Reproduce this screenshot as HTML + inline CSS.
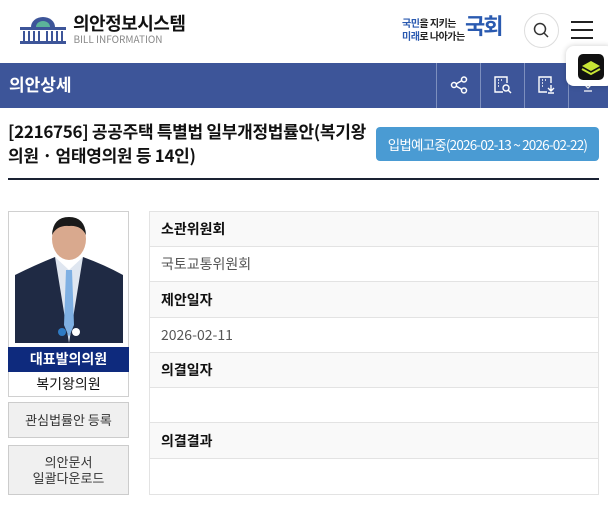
<!DOCTYPE html>
<html><head><meta charset="utf-8">
<style>
*{margin:0;padding:0;box-sizing:border-box}
body{width:608px;height:516px;overflow:hidden;background:#fff;font-family:"Noto Sans CJK KR","Liberation Sans",sans-serif;position:relative;color:#111}
.abs{position:absolute}
.bar{left:0;top:63px;width:608px;height:45px;background:#3d5599}
.bar .t{left:9px;top:9px;color:#fff;font-size:17px;font-weight:bold;line-height:24px}
.ic{top:0;width:44px;height:45px;border-left:1px solid #7d8fbe}
.title{left:8px;top:119px;width:380px;font-size:17px;font-weight:bold;line-height:24px;color:#111;white-space:nowrap;letter-spacing:-0.3px}
.btn{left:376px;top:127px;width:223px;height:34px;background:#4a9bd3;border-radius:4px;color:#fff;font-size:13.5px;text-align:center;line-height:34px;letter-spacing:-0.8px;white-space:nowrap}
.hr{left:8px;top:178px;width:591px;height:2px;background:#1a2233}
.card{left:8px;top:211px;width:121px;height:186px;border:1px solid #d0d0d0}
.lbl{left:8px;top:347px;width:121px;height:25px;background:#0e2a7d;color:#fff;font-weight:bold;font-size:14px;text-align:center;line-height:25px}
.nm{left:8px;top:372px;width:121px;height:24px;font-size:14px;text-align:center;line-height:24px}
.gb{left:8px;width:121px;background:#f0f0f0;border:1px solid #ccc;font-size:13px;color:#333;text-align:center;display:flex;align-items:center;justify-content:center;line-height:16px}
.tbl{left:149px;top:211px;width:450px;height:284px;border:1px solid #e3e3e3}
.row{position:absolute;left:0;width:448px;border-bottom:1px solid #e3e3e3;padding-left:11px;font-size:14px;display:flex;align-items:center}
.h{background:#f9f9f9;font-weight:bold;color:#111}
.v{color:#555}
</style></head><body>
<svg class="abs" style="left:18px;top:15px" width="50" height="30" viewBox="0 0 50 30">
<path d="M13 12 A12 10 0 0 1 37 12 Z" fill="#3d5599"/>
<path d="M18 12 A7 6 0 0 1 32 12 Z" fill="#5cb39a"/>
<rect x="2" y="12" width="46" height="3" fill="#3d5599"/>
<g fill="#3d5599"><rect x="5" y="16" width="2" height="10"/><rect x="10" y="16" width="2" height="10"/><rect x="15" y="16" width="2" height="10"/><rect x="20" y="16" width="2" height="10"/><rect x="28" y="16" width="2" height="10"/><rect x="33" y="16" width="2" height="10"/><rect x="38" y="16" width="2" height="10"/><rect x="43" y="16" width="2" height="10"/></g>
<rect x="2" y="26" width="46" height="3" fill="#3d5599"/>
</svg>
<div class="abs" style="left:73px;top:10px;font-size:18px;font-weight:bold;letter-spacing:-0.5px;line-height:26px">의안정보시스템</div>
<div class="abs" style="left:63px;top:33px;font-size:10px;color:#888;line-height:12px;width:110px;text-align:center">BILL INFORMATION</div>
<div class="abs" style="left:402px;top:16px;font-size:10px;line-height:13px;font-weight:bold;color:#222;letter-spacing:-0.5px"><span style="color:#2a5ab0">국민</span>을 지키는<br><span style="color:#2a5ab0">미래</span>로 나아가는</div>
<div class="abs" style="left:465px;top:10px;font-size:22px;font-weight:bold;color:#2a5ab0;letter-spacing:-2px;line-height:30px">국회</div>
<div class="abs" style="left:524px;top:13px;width:35px;height:35px;border-radius:50%;border:1px solid #ddd;background:#fff"></div>
<svg class="abs" style="left:533px;top:22px" width="17" height="17" viewBox="0 0 17 17"><circle cx="7" cy="7" r="5.5" fill="none" stroke="#333" stroke-width="1.5"/><path d="M11 11 L15 15" stroke="#333" stroke-width="1.5"/></svg>
<div class="abs" style="left:571px;top:21px;width:22px;height:2px;background:#222"></div>
<div class="abs" style="left:571px;top:29px;width:22px;height:2px;background:#222"></div>
<div class="abs" style="left:571px;top:37px;width:22px;height:2px;background:#222"></div>
<div class="abs bar">
 <div class="abs t">의안상세</div>
 <div class="abs ic" style="left:436px"><svg style="margin:13px 0 0 13px" width="18" height="18" viewBox="0 0 18 18" fill="none" stroke="#fff" stroke-width="1.5"><circle cx="14" cy="3.5" r="2.5"/><circle cx="4" cy="9" r="2.5"/><circle cx="14" cy="14.5" r="2.5"/><path d="M6 8 L12 4.5 M6 10 L12 13.5"/></svg></div>
 <div class="abs ic" style="left:480px"><svg style="margin:12px 0 0 12px" width="20" height="20" viewBox="0 0 20 20" fill="none" stroke="#fff" stroke-width="1.4"><path d="M10 17 H2 V2 H14 V8"/><circle cx="13" cy="13" r="3"/><path d="M15 15 L18 18"/><path d="M5 5h1M8 5h1M5 8h1M5 11h1" stroke-width="1.5"/></svg></div>
 <div class="abs ic" style="left:524px"><svg style="margin:12px 0 0 12px" width="20" height="20" viewBox="0 0 20 20" fill="none" stroke="#fff" stroke-width="1.4"><path d="M10 17 H2 V2 H14 V8"/><path d="M14 10 V16 M11 13 L14 16 L17 13 M11 18 H17"/><path d="M5 5h1M8 5h1M5 8h1M5 11h1" stroke-width="1.5"/></svg></div>
 <div class="abs ic" style="left:568px;width:40px"><svg style="margin:18px 0 0 13px" width="12" height="12" viewBox="0 0 12 12" fill="none" stroke="#fff" stroke-width="1.3"><path d="M2 3 L6 7 L10 3 M2 10 H10"/></svg></div>
</div>
<div class="abs" style="left:566px;top:46px;width:48px;height:40px;background:#fff;border-radius:8px;box-shadow:0 0 6px rgba(0,0,0,.2)"></div>
<div class="abs" style="left:578px;top:54px;width:26px;height:26px;background:#111;border-radius:5px"></div>
<svg class="abs" style="left:580px;top:58px" width="22" height="18" viewBox="0 0 22 18"><path d="M2 8 L11 3 L20 8 L11 13 Z" fill="#c8e635"/><path d="M2 11 L11 16 L20 11" fill="none" stroke="#c8e635" stroke-width="2"/></svg>
<div class="abs title">[2216756] 공공주택 특별법 일부개정법률안(복기왕<br>의원 · 엄태영의원 등 14인)</div>
<div class="abs btn">입법예고중(2026-02-13 ~ 2026-02-22)</div>
<div class="abs hr"></div>
<div class="abs card"></div>
<svg class="abs" style="left:15px;top:215px" width="108" height="128" viewBox="0 0 108 128">
<rect width="108" height="128" fill="#fff"/>
<path d="M0 128 V60 Q20 50 40 42 L54 60 L68 42 Q90 50 108 60 V128Z" fill="#1f2a44"/>
<path d="M40 42 L54 128 L68 42 L54 55Z" fill="#dfe6f0"/>
<path d="M51 55 L57 55 L59 110 L54 122 L49 110Z" fill="#7fb0e3"/>
<ellipse cx="54" cy="24" rx="17" ry="21" fill="#d9a98e"/>
<path d="M37 20 Q38 2 54 2 Q70 2 71 20 Q66 10 54 11 Q42 10 37 20Z" fill="#1a1a1a"/>
<circle cx="47" cy="117" r="4" fill="#2f7bc4"/><circle cx="61" cy="117" r="4" fill="#fff"/>
</svg>
<div class="abs lbl">대표발의의원</div>
<div class="abs nm">복기왕의원</div>
<div class="abs gb" style="top:402px;height:36px">관심법률안 등록</div>
<div class="abs gb" style="top:445px;height:50px">의안문서<br>일괄다운로드</div>
<div class="abs tbl">
 <div class="row h" style="top:0;height:35px">소관위원회</div>
 <div class="row v" style="top:35px;height:35px">국토교통위원회</div>
 <div class="row h" style="top:70px;height:36px">제안일자</div>
 <div class="row v" style="top:106px;height:35px">2026-02-11</div>
 <div class="row h" style="top:141px;height:35px">의결일자</div>
 <div class="row v" style="top:176px;height:35px"></div>
 <div class="row h" style="top:211px;height:36px">의결결과</div>
</div>
</body></html>
